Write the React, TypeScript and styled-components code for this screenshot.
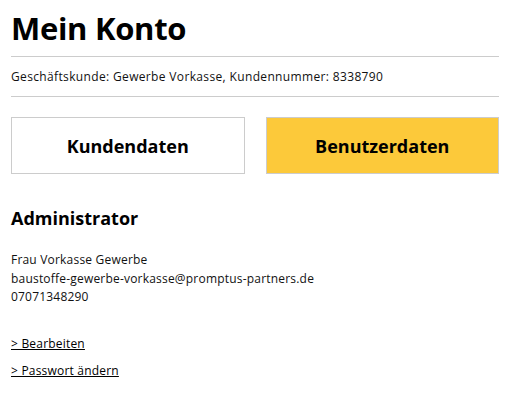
import React from "react";
import styled, { createGlobalStyle } from "styled-components";

const Global = createGlobalStyle`
  html, body { margin: 0; padding: 0; background: #fff; }
  body { font-family: "Open Sans", "Noto Sans", sans-serif; color: #000; }
`;

const Page = styled.div`
  padding: 8px 14px 0 11px;
  display: flex;
  flex-direction: column;
`;

const Title = styled.h1`
  margin: 0;
  font-size: 31px;
  font-weight: 700;
  line-height: 40px;
  letter-spacing: -0.3px;
`;

const Divider = styled.hr<{ $top?: number }>`
  margin: ${(p) => p.$top ?? 0}px 0 0;
  border: 0;
  border-top: 1px solid #cccccc;
`;

const Meta = styled.div`
  font-size: 12px;
  line-height: 39px;
  letter-spacing: 0.35px;
  color: #111;
`;

const Tabs = styled.div`
  display: grid;
  grid-template-columns: 1fr 1fr;
  gap: 21px;
  margin-top: 20px;
`;

const Tab = styled.button<{ $active?: boolean }>`
  height: 57px;
  border: 1px solid #cccccc;
  background: ${(p) => (p.$active ? "#fcc93a" : "#fff")};
  font-family: inherit;
  font-size: 18px;
  font-weight: 700;
  color: #000;
  padding: 0;
`;

const Heading = styled.h2`
  margin: 31px 0 0;
  font-size: 18px;
  font-weight: 700;
  line-height: 26px;
`;

const Info = styled.div`
  margin-top: 20px;
  font-size: 12px;
  line-height: 18.5px;
  letter-spacing: 0.2px;
  color: #111;
`;

const Links = styled.div`
  margin-top: 27px;
  display: flex;
  flex-direction: column;
  gap: 8.5px;
  align-items: flex-start;
`;

const Link = styled.a`
  font-size: 12px;
  line-height: 19px;
  letter-spacing: 0.2px;
  color: #000;
  text-decoration: underline;
  cursor: pointer;
`;

export default function App() {
  return (
    <>
      <Global />
      <Page>
        <Title>Mein Konto</Title>
        <Divider $top={8} />
        <Meta>Geschäftskunde: Gewerbe Vorkasse, Kundennummer: 8338790</Meta>
        <Divider />
        <Tabs>
          <Tab>Kundendaten</Tab>
          <Tab $active>Benutzerdaten</Tab>
        </Tabs>
        <Heading>Administrator</Heading>
        <Info>
          Frau Vorkasse Gewerbe
          <br />
          baustoffe-gewerbe-vorkasse@promptus-partners.de
          <br />
          07071348290
        </Info>
        <Links>
          <Link>&gt; Bearbeiten</Link>
          <Link>&gt; Passwort ändern</Link>
        </Links>
      </Page>
    </>
  );
}
